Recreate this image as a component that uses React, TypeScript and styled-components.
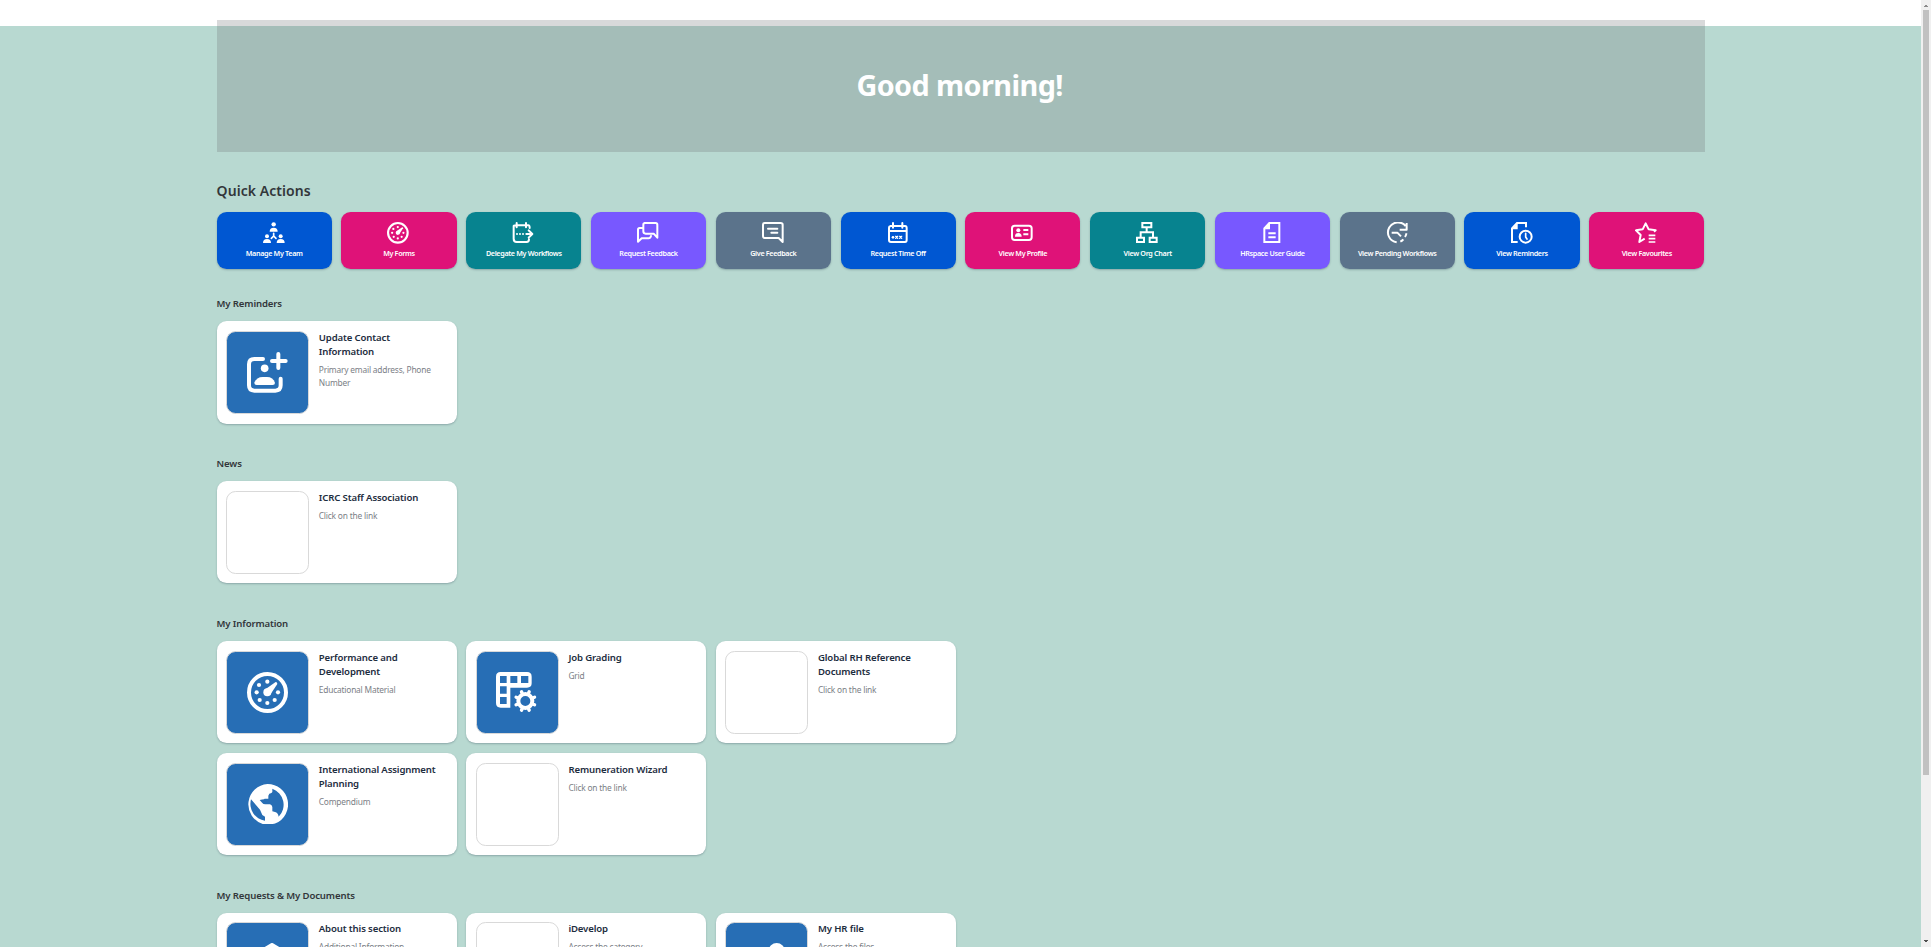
import React from 'react';
import styled, { createGlobalStyle } from 'styled-components';

const GlobalStyle = createGlobalStyle`
  * { box-sizing: border-box; }
  html, body { margin: 0; padding: 0; overflow: hidden; }
  body { font-family: "Noto Sans", "Open Sans", sans-serif; }
  h1, h2, h3, p { margin: 0; }
`;

const Window = styled.div`
  display: flex;
  width: 100%;
  height: 947px;
  overflow: hidden;
  background: #fff;
`;

const Page = styled.main`
  flex: 1;
  min-width: 0;
  height: 947px;
  overflow: hidden;
  padding: 20px 216px 0 216.6px;
  background: linear-gradient(to bottom, #fff 26px, #b8d9d1 26px);
`;

const Hero = styled.header`
  display: flex;
  align-items: center;
  justify-content: center;
  width: 1488px;
  height: 132px;
  background: rgba(112, 116, 119, 0.27);
`;

const Greeting = styled.h1`
  margin: -2px 2px 0 0;
  color: #fff;
  font-size: 28.8px;
  font-weight: 700;
  line-height: 40px;
  letter-spacing: -0.57px;
`;

const QuickTitle = styled.h2`
  margin-top: 28px;
  height: 32px;
  color: #32363a;
  font-size: 14px;
  font-weight: 600;
  line-height: 22px;
  letter-spacing: 0.06px;
`;

const QuickRow = styled.nav`
  display: grid;
  grid-template-columns: repeat(12, 1fr);
  gap: 9.6px;
  width: 1487.8px;
  height: 57px;
`;

const Tile = styled.a<{ $tone: string }>`
  display: flex;
  flex-direction: column;
  align-items: center;
  padding-top: 10px;
  border-radius: 9.6px;
  background: ${(p) => p.$tone};
  color: #fff;
  box-shadow: 0 1px 2px rgba(34, 53, 72, 0.3);
`;

const TileIcon = styled.svg`
  display: block;
  width: 22px;
  height: 22px;
  margin-left: -1px;
`;

const TileLabel = styled.span`
  margin-top: 4px;
  font-size: 7.2px;
  font-weight: 600;
  line-height: 11px;
  letter-spacing: -0.34px;
  white-space: nowrap;
`;

const Section = styled.section<{ $height: number; $first?: boolean }>`
  height: ${(p) => p.$height}px;
  padding-top: ${(p) => (p.$first ? 27.2 : 0)}px;
`;

const SectionTitle = styled.h2`
  height: 25px;
  color: #32363a;
  font-size: 9.6px;
  font-weight: 600;
  line-height: 15px;
  letter-spacing: -0.14px;
  white-space: nowrap;
`;

const Cards = styled.div`
  display: grid;
  grid-template-columns: repeat(3, 240px);
  grid-auto-rows: 102.4px;
  gap: 9.6px;
`;

const Card = styled.article`
  display: flex;
  gap: 9.8px;
  padding: 9.6px 12px 9.6px 9.6px;
  border-radius: 9.6px;
  background: #fff;
  box-shadow: 0 1px 2px rgba(34, 53, 72, 0.3);
`;

const Thumb = styled.div<{ $filled: boolean }>`
  display: flex;
  flex: none;
  align-items: center;
  justify-content: center;
  width: 82.8px;
  height: 83.2px;
  border: 1px solid #d9d9d9;
  border-radius: 9.6px;
  background: ${(p) => (p.$filled ? '#276eb5' : '#fff')};
`;

const ThumbIcon = styled.svg`
  display: block;
  width: 41px;
  height: 41px;
  margin-left: -1px;
`;

const CardText = styled.div`
  min-width: 0;
  flex: 1;
`;

const CardTitle = styled.h3`
  color: #1d2d3e;
  font-size: 9.6px;
  font-weight: 600;
  line-height: 14.2px;
  letter-spacing: -0.14px;
  white-space: pre-line;
`;

const CardNote = styled.p`
  margin-top: 4.8px;
  color: #7b8086;
  font-size: 8.4px;
  line-height: 12.8px;
  letter-spacing: -0.2px;
  white-space: pre-line;
`;

const ScrollTrack = styled.aside`
  display: flex;
  flex-direction: column;
  align-items: center;
  justify-content: space-between;
  flex: none;
  width: 10px;
  height: 947px;
  padding: 5px 0;
  background: #f0f0f0;
`;

const ScrollThumb = styled.div`
  width: 6px;
  height: 765px;
  margin: 3px 0 auto;
  background: #c1c1c1;
`;

const ScrollArrow = styled.svg`
  display: block;
  width: 4px;
  height: 2px;
`;

const Gauge = () => (
  <>
    <circle cx="61.5" cy="61.5" r="55.5" fill="none" stroke="#fff" strokeWidth="12" />
    {[[61, 29], [36, 39], [29, 61], [38, 84], [61, 93], [83, 84], [93, 61]].map(([x, y]) => (
      <circle key={`${x}-${y}`} cx={x} cy={y} r="6.3" fill="#fff" />
    ))}
    <circle cx="61" cy="61" r="12" fill="#fff" />
    <path d="M53 53 L86 30 Q91 30 91 36 L69 69Z" fill="#fff" />
  </>
);

const line = (width: number) => ({
  fill: 'none',
  stroke: '#fff',
  strokeWidth: width,
  strokeLinecap: 'round' as const,
  strokeLinejoin: 'round' as const,
});

const bigIcons: Record<string, React.ReactNode> = {
  contact: (
    <>
      <path d="M48 21H22Q6 21 6 37V100Q6 116 22 116H85Q101 116 101 100V80M94 6V48M75 27H116" {...line(12)} />
      <circle cx="53" cy="49" r="11.5" fill="#fff" />
      <path d="M22 92Q29 75 47 75H60Q78 75 84 92Q84 99 77 99H29Q22 99 22 92Z" fill="#fff" />
    </>
  ),
  gauge: <Gauge />,
  grid: (
    <>
      <path
        fillRule="evenodd"
        fill="#fff"
        d="M14 0H93Q107 0 107 14V34Q107 47 93 47H43V107H14Q0 107 0 93V14Q0 0 14 0ZM12 12V33H32V12ZM43 12V33H64V12ZM75 12V33H97V12ZM12 43V65H32V43ZM12 75V96H32V75Z"
      />
      <circle cx="88" cy="87" r="21" fill="none" stroke="#fff" strokeWidth="12" />
      {[22.5, 67.5, 112.5, 157.5, 202.5, 247.5, 292.5, 337.5].map((a) => (
        <path key={a} d="M88 64V57" transform={`rotate(${a} 88 87)`} {...line(10)} />
      ))}
    </>
  ),
  globe: (
    <path
      fill="#fff"
      fillRule="evenodd"
      d="M61.5 0A61.5 61.5 0 0 1 86 118Q82 120 76 120H47A61.5 61.5 0 0 1 61.5 0ZM12 46A51 51 0 0 0 54 110V98L46 93L39 77ZM76 14V24Q75 28 67 29L64 35V44H53L51 46Q46 46 38 48L46 57Q48 61 55 61H69Q75 63 76 69V82L84 84Q93 86 95 98A51 51 0 0 0 76 14Z"
    />
  ),
  cap: <path d="M75 6L112 28L75 50L38 28Z" fill="#fff" {...line(12)} />,
  person: <circle cx="92" cy="24" r="24" fill="#fff" />,
};

const smallIcons: Record<string, React.ReactNode> = {
  team: (
    <g fill="#fff">
      <circle cx="32" cy="7" r="6.5" />
      <path d="M20 29Q20 17 32 17Q44 17 44 29ZM0 63Q0 51 12 51Q24 51 24 63ZM41 63Q41 51 53 51Q65 51 65 63Z" />
      <circle cx="12" cy="43" r="6" />
      <circle cx="53" cy="43" r="6" />
      <path d="M32 34V42L25 49M32 42L39 49" {...line(5)} />
    </g>
  ),
  gauge: <g transform="scale(.53)"><Gauge /></g>,
  delegate: (
    <>
      <path d="M5 12V50Q5 60 14 60H44Q51 60 51 52M5 12Q5 10 12 10H49Q53 10 53 18M14 3V16M42 3V16M43 36H60M50 25L61 36L50 47" {...line(6)} />
      <g fill="#fff"><circle cx="15" cy="36" r="3" /><circle cx="24" cy="36" r="3" /><circle cx="33" cy="36" r="3" /></g>
    </>
  ),
  chat: (
    <path d="M22 3H56Q61 3 61 8V47L50 35H26Q19 35 19 28V8Q19 3 24 3ZM18 18H8Q3 18 3 23V59L14 49H35Q40 49 42 42" {...line(6)} />
  ),
  comment: <path d="M8 3H56Q62 3 62 8V60L50 48H8Q3 48 3 43V8Q3 3 8 3ZM18 20H46M28 32H46" {...line(6)} />,
  calendar: (
    <>
      <path d="M10 12H54Q59 12 59 18V54Q59 60 54 60H12Q6 60 6 54V18Q6 12 12 12ZM6 27H59M18 3V17M46 3V17" {...line(6)} />
      <path d="M26 43L32 49M32 43L26 49M38 43L44 49M44 43L38 49" {...line(4)} />
      <circle cx="18" cy="46" r="4" fill="#fff" />
    </>
  ),
  profile: (
    <>
      <rect x="3" y="11" width="59" height="43" rx="8" {...line(6)} />
      <circle cx="22" cy="25" r="6" fill="#fff" />
      <path d="M12 44Q12 33 22 33Q32 33 32 44ZM37 21H52V27H37ZM37 34H52V40H37Z" fill="#fff" />
    </>
  ),
  org: (
    <path d="M19 3H46V16H19ZM3 47H24V60H3ZM41 47H62V60H41ZM32 17V31M14 46V31H51V46" {...line(6)} strokeLinejoin="miter" strokeLinecap="butt" />
  ),
  guide: (
    <>
      <path d="M25 3H55V60H10V19Z" {...line(6)} strokeLinejoin="miter" />
      <path d="M27 3V22H10ZM22 31H44V37H22ZM22 43H44V49H22Z" fill="#fff" />
    </>
  ),
  pending: (
    <>
      <path d="M59 12A30 30 0 1 0 32 61M62 3V23H41M17 32H34L45 43" {...line(6)} strokeLinecap="butt" />
      <path d="M43 59Q49 56 52 52M57 45Q61 40 61 34" {...line(6)} strokeLinecap="butt" />
    </>
  ),
  reminders: (
    <>
      <path d="M20 60H3V19L18 3H45V16" {...line(6)} strokeLinejoin="miter" strokeLinecap="butt" />
      <path d="M20 3V22H3Z" fill="#fff" />
      <circle cx="44" cy="44" r="18" {...line(6)} />
      <path d="M44 34V45L48 51" {...line(5)} />
    </>
  ),
  favourite: (
    <>
      <path d="M29 50L13 60L17 39L3 25L23 22L32 4L41 22L62 25L57 29" {...line(6)} strokeLinecap="butt" />
      <path d="M41 40H61M41 50H61M41 60H61" {...line(5)} strokeLinecap="butt" />
    </>
  ),
};

const blue = '#0057d2';
const pink = '#df1278';
const teal = '#07838f';
const violet = '#7858ff';
const slate = '#5b738b';

const actions: [string, string, string][] = [
  ['team', 'Manage My Team', blue],
  ['gauge', 'My Forms', pink],
  ['delegate', 'Delegate My Workflows', teal],
  ['chat', 'Request Feedback', violet],
  ['comment', 'Give Feedback', slate],
  ['calendar', 'Request Time Off', blue],
  ['profile', 'View My Profile', pink],
  ['org', 'View Org Chart', teal],
  ['guide', 'HRspace User Guide', violet],
  ['pending', 'View Pending Workflows', slate],
  ['reminders', 'View Reminders', blue],
  ['favourite', 'View Favourites', pink],
];

type CardData = { title: string; note: string; icon?: string };

const sections: { title: string; height: number; cards: CardData[] }[] = [
  {
    title: 'My Reminders',
    height: 187.1,
    cards: [{ title: 'Update Contact\nInformation', note: 'Primary email address, Phone\nNumber', icon: 'contact' }],
  },
  { title: 'News', height: 159.9, cards: [{ title: 'ICRC Staff Association', note: 'Click on the link' }] },
  {
    title: 'My Information',
    height: 271.8,
    cards: [
      { title: 'Performance and\nDevelopment', note: 'Educational Material', icon: 'gauge' },
      { title: 'Job Grading', note: 'Grid', icon: 'grid' },
      { title: 'Global RH Reference\nDocuments', note: 'Click on the link' },
      { title: 'International Assignment\nPlanning', note: 'Compendium', icon: 'globe' },
      { title: 'Remuneration Wizard', note: 'Click on the link' },
    ],
  },
  {
    title: 'My Requests & My Documents',
    height: 160,
    cards: [
      { title: 'About this section', note: 'Additional Information', icon: 'cap' },
      { title: 'iDevelop', note: 'Access the category' },
      { title: 'My HR file', note: 'Access the files', icon: 'person' },
    ],
  },
];

export default function App() {
  return (
    <Window>
      <GlobalStyle />
      <Page>
        <Hero>
          <Greeting>Good morning!</Greeting>
        </Hero>
        <QuickTitle>Quick Actions</QuickTitle>
        <QuickRow>
          {actions.map(([icon, label, tone]) => (
            <Tile key={label} $tone={tone}>
              <TileIcon viewBox="0 0 66 66">{smallIcons[icon]}</TileIcon>
              <TileLabel>{label}</TileLabel>
            </Tile>
          ))}
        </QuickRow>
        {sections.map((s, i) => (
          <Section key={s.title} $height={s.height} $first={i === 0}>
            <SectionTitle>{s.title}</SectionTitle>
            <Cards>
              {s.cards.map((c) => (
                <Card key={c.title}>
                  <Thumb $filled={!!c.icon}>
                    {c.icon && <ThumbIcon viewBox="0 0 123 123">{bigIcons[c.icon]}</ThumbIcon>}
                  </Thumb>
                  <CardText>
                    <CardTitle>{c.title}</CardTitle>
                    <CardNote>{c.note}</CardNote>
                  </CardText>
                </Card>
              ))}
            </Cards>
          </Section>
        ))}
      </Page>
      <ScrollTrack>
        <ScrollArrow viewBox="0 0 4 2"><path d="M1 0H3V1H4V2H0V1H1Z" fill="#8b8b8b" /></ScrollArrow>
        <ScrollThumb />
        <ScrollArrow viewBox="0 0 4 2"><path d="M0 0H4V1H3V2H1V1H0Z" fill="#505050" /></ScrollArrow>
      </ScrollTrack>
    </Window>
  );
}
